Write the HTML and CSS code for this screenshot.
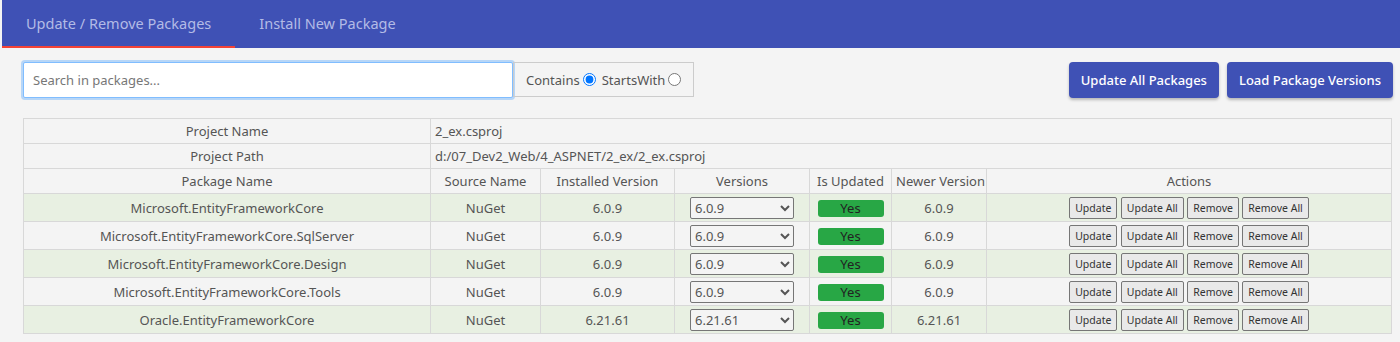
FILE: index.html
```html
<!DOCTYPE html>
<html lang="en">
<head>
    <meta charset="UTF-8">
    <title>NuGet Package Manager</title>
    <link rel="stylesheet" href="styles.css">
</head>
<body>
    <nav class="tabs">
        <div class="tab active">Update / Remove Packages</div>
        <div class="tab">Install New Package</div>
    </nav>

    <div class="content">
        <div class="toolbar">
            <input class="search" type="text" placeholder="Search in packages...">
            <div class="mode">
                <label>Contains <input type="radio" name="mode" checked></label>
                <label>StartsWith <input type="radio" name="mode"></label>
            </div>
            <div class="spacer"></div>
            <button class="btn">Update All Packages</button>
            <button class="btn">Load Package Versions</button>
        </div>

        <table class="packages">
            <colgroup>
                <col style="width: 407px">
                <col style="width: 110px">
                <col style="width: 134px">
                <col style="width: 135px">
                <col style="width: 82px">
                <col style="width: 95px">
                <col>
            </colgroup>
            <tr class="info">
                <td>Project Name</td>
                <td colspan="6" class="left">2_ex.csproj</td>
            </tr>
            <tr class="info">
                <td>Project Path</td>
                <td colspan="6" class="left">d:/07_Dev2_Web/4_ASPNET/2_ex/2_ex.csproj</td>
            </tr>
            <tr class="info">
                <td>Package Name</td>
                <td>Source Name</td>
                <td>Installed Version</td>
                <td>Versions</td>
                <td>Is Updated</td>
                <td>Newer Version</td>
                <td>Actions</td>
            </tr>
            <tbody id="rows"></tbody>
        </table>
    </div>

    <script>
        const packages = [
            ['Microsoft.EntityFrameworkCore', '6.0.9'],
            ['Microsoft.EntityFrameworkCore.SqlServer', '6.0.9'],
            ['Microsoft.EntityFrameworkCore.Design', '6.0.9'],
            ['Microsoft.EntityFrameworkCore.Tools', '6.0.9'],
            ['Oracle.EntityFrameworkCore', '6.21.61']
        ];

        const rows = document.getElementById('rows');
        packages.forEach(([name, version]) => {
            const tr = document.createElement('tr');
            tr.className = 'pkg';
            tr.innerHTML = `
                <td>${name}</td>
                <td>NuGet</td>
                <td>${version}</td>
                <td><select class="versions"><option>${version}</option></select></td>
                <td><span class="yes">Yes</span></td>
                <td>${version}</td>
                <td>
                    <button class="act">Update</button>
                    <button class="act">Update All</button>
                    <button class="act">Remove</button>
                    <button class="act">Remove All</button>
                </td>`;
            rows.appendChild(tr);
        });
    </script>
</body>
</html>
```

FILE: styles.css
```css
* {
    box-sizing: border-box;
}
body {
    margin: 0;
    background: #f4f4f4;
    font-family: 'Noto Sans', sans-serif;
    color: #555;
    font-size: 13px;
}
.tabs {
    display: flex;
    margin-left: 2px;
    height: 48px;
    background: #3f51b5;
}
.tab {
    padding: 0 24px;
    line-height: 46px;
    font-size: 14.5px;
    color: #b3bbe6;
    border-bottom: 2px solid transparent;
}
.tab.active {
    border-bottom-color: #f44336;
}
.content {
    padding: 14px 7px 0 23px;
}
.toolbar {
    display: flex;
    align-items: flex-start;
    margin-bottom: 20px;
}
.search {
    width: 490px;
    height: 36px;
    padding: 0 9px;
    border: 1px solid #80bdff;
    border-radius: 2px;
    box-shadow: 0 0 0 2px rgba(0, 123, 255, 0.25);
    font-family: inherit;
    font-size: 13px;
    color: #555;
    outline: none;
}
.search::placeholder {
    color: #777;
}
.mode {
    display: flex;
    align-items: center;
    gap: 6px;
    height: 35px;
    padding: 0 12px;
    border: 1px solid #ccc;
    color: #555;
}
.mode label {
    display: flex;
    align-items: center;
}
.mode input {
    margin: 0 0 0 3px;
    width: 13px;
    height: 13px;
}
.spacer {
    flex: 1;
}
.btn {
    height: 36px;
    margin-left: 8px;
    padding: 0 12px;
    background: #3f51b5;
    color: #fff;
    border: none;
    border-radius: 4px;
    box-shadow: 0 2px 3px rgba(0, 0, 0, 0.25);
    font-family: inherit;
    font-size: 13px;
    font-weight: 500;
}
.packages {
    width: 1369px;
    table-layout: fixed;
    border-collapse: collapse;
}
.packages td {
    border: 1px solid #d8d8d8;
    text-align: center;
    padding: 0 4px;
    white-space: nowrap;
}
.packages td.left {
    text-align: left;
}
.info td {
    height: 25px;
}
.pkg td {
    height: 28px;
}
.pkg:nth-child(odd) {
    background: #e8f0e2;
}
.versions {
    width: 104px;
    height: 22px;
    vertical-align: middle;
    border: 1px solid #767676;
    border-radius: 2px;
    background: #f4f4f4;
    font-family: inherit;
    font-size: 13px;
    color: #555;
}
.yes {
    display: inline-block;
    width: 66px;
    line-height: 17px;
    background: #28a745;
    color: #222;
    border-radius: 3px;
}
.act {
    height: 22px;
    margin: 0;
    padding: 0 5px;
    vertical-align: middle;
    background: #e9e9e9;
    border: 1px solid #767676;
    border-radius: 2px;
    font-family: inherit;
    font-size: 10.5px;
    color: #333;
}
```
